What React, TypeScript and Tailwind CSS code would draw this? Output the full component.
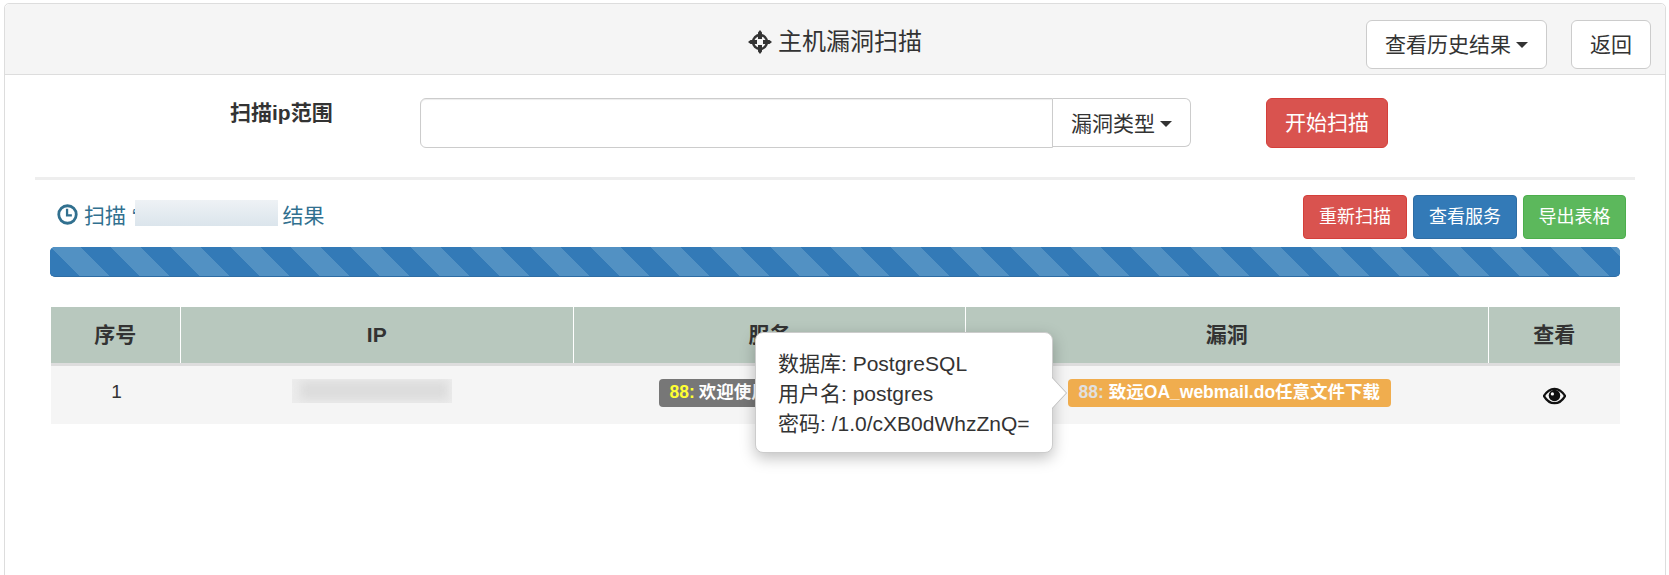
import React from "react";

const font = "font-['Liberation_Sans','Noto_Sans_CJK_SC',sans-serif]";

function Caret() {
  return (
    <span className="ml-[5px] inline-block h-0 w-0 border-x-[6px] border-t-[6px] border-x-transparent border-t-[#333] align-middle" />
  );
}

function CrosshairIcon() {
  return (
    <svg viewBox="0 0 24 24" className="h-[24px] w-[24px] text-[#333]" fill="none" stroke="currentColor">
      <circle cx="12" cy="12" r="7" strokeWidth="2.400" />
      <path d="M10 9V2.500L12 0l2 2.500V9zM10 15v6.500l2 2.500 2-2.500V15zM9 10H2.500L0 12l2.500 2H9zM15 10h6.500L24 12l-2.500 2H15z" fill="currentColor" stroke="none" />
    </svg>
  );
}

function ClockIcon() {
  return (
    <svg viewBox="0 0 24 24" className="h-[21px] w-[21px]" fill="none" stroke="currentColor">
      <circle cx="12" cy="12" r="10" strokeWidth="3.200" />
      <path d="M11.500 5.500V13H17" strokeWidth="2.600" />
    </svg>
  );
}

function EyeIcon() {
  return (
    <svg viewBox="0 0 24 18" className="h-[18px] w-[23px] text-[#111]" fill="none" stroke="currentColor">
      <path d="M1 9C4 4 8 1.500 12 1.500S20 4 23 9c-3 5-7 7.500-11 7.500S4 14 1 9z" strokeWidth="2.400" />
      <circle cx="12" cy="8.500" r="6" fill="currentColor" stroke="none" />
      <circle cx="9.800" cy="6.800" r="1.700" fill="#fff" stroke="none" />
    </svg>
  );
}

function Panel() {
  return (
    <div className="relative ml-[4px] mt-[3px] h-[600px] w-[1662px] rounded-t-[5px] border border-[#ddd] bg-white">
      {/* Header */}
      <div className="grid h-[71px] grid-cols-[1fr_auto_1fr] items-start rounded-t-[5px] border-b border-[#ddd] bg-[#f5f5f5] px-[14px] pt-[16px]">
        <div />
        <h3 className="mt-[7px] flex items-center gap-[6px] text-[24px] leading-[30px] text-[#333]">
          <CrosshairIcon />
          主机漏洞扫描
        </h3>
        <div className="flex justify-end gap-[24px]">
          <button className="flex h-[49px] w-[181px] items-center justify-center rounded-[6px] border border-[#ccc] bg-white text-[21px] text-[#333]">
            查看历史结果
            <Caret />
          </button>
          <button className="h-[49px] w-[80px] rounded-[6px] border border-[#ccc] bg-white text-[21px] text-[#333]">
            返回
          </button>
        </div>
      </div>

      {/* Scan form */}
      <div className="flex items-start pl-[225px] pt-[23px]">
        <label className="w-[190px] pt-[2px] text-[21px] font-bold leading-[26px] text-[#333]">扫描ip范围</label>
        <div className="flex h-[50px] w-[771px]">
          <input className="h-full w-[633px] rounded-l-[6px] border border-[#ccc] bg-white shadow-[inset_0_1px_1px_rgba(0,0,0,0.075)]" />
          <button className="flex h-[49px] flex-1 items-center justify-center rounded-r-[6px] border border-l-0 border-[#ccc] bg-white pt-[2px] text-[21px] text-[#333]">
            漏洞类型
            <Caret />
          </button>
        </div>
        <button className="ml-[75px] h-[50px] w-[122px] rounded-[6px] border border-[#d43f3a] bg-[#d9534f] text-[21px] text-white">
          开始扫描
        </button>
      </div>

      <hr className="mx-[30px] mt-[29px] border-t-[3px] border-[#eee]" />

      {/* Result title and actions */}
      <div className="flex items-start justify-between pl-[52px] pr-[39px] pt-[15px]">
        <div className="flex h-[36px] items-center gap-[6px] text-[21px] text-[#31708f]">
          <span className="mt-[2px]">
            <ClockIcon />
          </span>
          <span className="flex items-center">
            <span className="pt-[6px]">扫描 ‘</span>
            <span className="ml-[-2px] mr-[5px] h-[26px] w-[143px] bg-gradient-to-b from-[#eef2f5] to-[#dbe5ec]" />
            <span className="pt-[6px]">结果</span>
          </span>
        </div>
        <div className="flex gap-[6px]">
          <button className="h-[44px] w-[104px] rounded-[4px] border border-[#d43f3a] bg-[#d9534f] text-[18px] text-white">重新扫描</button>
          <button className="h-[44px] w-[104px] rounded-[4px] border border-[#2e6da4] bg-[#337ab7] text-[18px] text-white">查看服务</button>
          <button className="h-[44px] w-[103px] rounded-[4px] border border-[#4cae4c] bg-[#5cb85c] text-[18px] text-white">导出表格</button>
        </div>
      </div>

      {/* Progress */}
      <div className="ml-[45px] mt-[8px] h-[30px] w-[1570px] rounded-[5px] border-b border-[#2e6da4] bg-[#337ab7] bg-[repeating-linear-gradient(45deg,#337ab7_0,#337ab7_21.213px,#5291c3_21.213px,#5291c3_42.426px)]" />

      {/* Table */}
      <table className="ml-[46px] mt-[30px] w-[1569px] table-fixed border-collapse text-center text-[#333]">
        <colgroup>
          <col className="w-[129px]" />
          <col className="w-[393.500px]" />
          <col className="w-[392px]" />
          <col className="w-[522.500px]" />
          <col className="w-[132px]" />
        </colgroup>
        <thead>
          <tr className="h-[57px] border-b-[3px] border-[#ddd] bg-[#b8c8be] text-[21px] font-bold">
            <th className="border-r border-white">序号</th>
            <th className="border-r border-white">IP</th>
            <th className="border-r border-white">服务</th>
            <th className="border-r border-white">漏洞</th>
            <th>查看</th>
          </tr>
        </thead>
        <tbody>
          <tr className="h-[60px] bg-[#f5f5f5] align-top">
            <td className="pl-[2px] pt-[11px] text-[19px] leading-[30px]">1</td>
            <td className="pt-[13px]">
              <div className="relative ml-[112px] h-[24px] w-[160px] overflow-hidden bg-[#ececec]">
                <div className="absolute bottom-[3px] left-[8px] right-[4px] top-[2px] bg-[#dcdcdc] blur-[4px]" />
              </div>
            </td>
            <td className="pt-[13px]">
              <span className="ml-[85px] flex h-[28px] w-[300px] items-center whitespace-nowrap rounded-[4px] bg-[#777] pl-[11px] text-[17.500px] font-bold text-white">
                <span className="mr-[4px] text-[#ffff33]">88:</span>欢迎使用
              </span>
            </td>
            <td className="pt-[13px]">
              <span className="ml-[102px] flex h-[28px] w-[323px] items-center whitespace-nowrap rounded-[4px] bg-[#f0ad4e] pl-[11px] text-[17.500px] font-bold text-white">
                <span className="mr-[5px] text-[#e0e0e0]">88:</span>致远OA_webmail.do任意文件下载
              </span>
            </td>
            <td className="pt-[21px]">
              <div className="flex justify-center">
                <EyeIcon />
              </div>
            </td>
          </tr>
        </tbody>
      </table>

      {/* Popover */}
      <div className="absolute left-[750px] top-[328px] z-10 h-[121px] w-[298px] rounded-[8px] border border-[#ccc] bg-white pl-[22px] pt-[16px] text-[21px] leading-[30px] text-[#333] shadow-[0_5px_15px_rgba(0,0,0,0.25)]">
        <div>数据库: PostgreSQL</div>
        <div>用户名: postgres</div>
        <div>密码: /1.0/cXB0dWhzZnQ=</div>
        <span className="absolute right-[-15px] top-[44px] h-0 w-0 border-y-[16px] border-l-[15px] border-y-transparent border-l-[#bbb]" />
        <span className="absolute right-[-14px] top-[45px] h-0 w-0 border-y-[15px] border-l-[14px] border-y-transparent border-l-white" />
      </div>
    </div>
  );
}

export default function App() {
  return (
    <div className={`h-[575px] w-full overflow-hidden bg-white ${font}`}>
      <Panel />
    </div>
  );
}
